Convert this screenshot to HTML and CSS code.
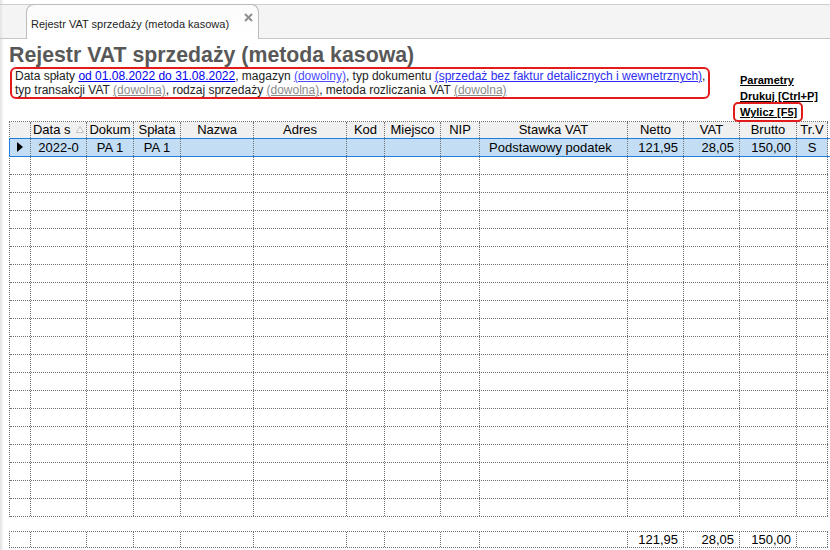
FILE: index.html
```html
<!DOCTYPE html>
<html lang="pl">
<head>
  <meta charset="UTF-8">
  <meta name="viewport" content="width=device-width, initial-scale=1.0">
  <title>Rejestr VAT sprzedaży (metoda kasowa)</title>
  <link rel="stylesheet" href="styles.css">
</head>
<body>
  <!-- Zakładki -->
  <div class="tabbar">
    <div class="tab">
      <span class="tab-title">Rejestr VAT sprzedaży (metoda kasowa)</span>
      <svg class="tab-close" width="9" height="9" viewBox="0 0 9 9"><path d="M1 1L8 8M8 1L1 8" stroke="#8e8e8e" stroke-width="2"/></svg>
    </div>
  </div>

  <div class="page">
    <div class="report-head">
      <div class="report-info">
        <h1>Rejestr VAT sprzedaży (metoda kasowa)</h1>
        <div class="filters">
          Data spłaty <a class="f-date">od 01.08.2022 do 31.08.2022</a>, magazyn <a class="f-link">(dowolny)</a>, typ dokumentu <a class="f-type">(sprzedaż bez faktur detalicznych i wewnetrznych)</a>,<br>
          typ transakcji VAT <a class="f-any">(dowolna)</a>, rodzaj sprzedaży <a class="f-any">(dowolna)</a>, metoda rozliczania VAT <a class="f-any">(dowolna)</a>
        </div>
      </div>
      <div class="actions">
        <a>Parametry</a>
        <a>Drukuj [Ctrl+P]</a>
        <a class="marked">Wylicz [F5]</a>
      </div>
    </div>

    <!-- Tabela rejestru -->
    <div class="grid" id="grid">
      <div class="row head">
        <div class="cell"></div>
        <div class="cell">Data s <svg class="sort" width="8" height="7" viewBox="0 0 8 7"><polygon points="0.5,6.5 4,0.5 7.5,6.5" fill="#f6f6f6" stroke="#c4c4c4"/></svg></div>
        <div class="cell">Dokum</div>
        <div class="cell">Spłata</div>
        <div class="cell">Nazwa</div>
        <div class="cell">Adres</div>
        <div class="cell">Kod</div>
        <div class="cell">Miejsco</div>
        <div class="cell">NIP</div>
        <div class="cell">Stawka VAT</div>
        <div class="cell">Netto</div>
        <div class="cell">VAT</div>
        <div class="cell">Brutto</div>
        <div class="cell">Tr.V</div>
      </div>
      <div class="row selected">
        <div class="cell"><span class="pointer"></span></div>
        <div class="cell">2022-0</div>
        <div class="cell">PA 1</div>
        <div class="cell">PA 1</div>
        <div class="cell"></div>
        <div class="cell"></div>
        <div class="cell"></div>
        <div class="cell"></div>
        <div class="cell"></div>
        <div class="cell left">Podstawowy podatek</div>
        <div class="cell num">121,95</div>
        <div class="cell num">28,05</div>
        <div class="cell num">150,00</div>
        <div class="cell">S</div>
      </div>
    </div>

    <div class="row total">
      <div class="cell"></div>
      <div class="cell"></div>
      <div class="cell"></div>
      <div class="cell"></div>
      <div class="cell"></div>
      <div class="cell"></div>
      <div class="cell"></div>
      <div class="cell"></div>
      <div class="cell"></div>
      <div class="cell"></div>
      <div class="cell num">121,95</div>
      <div class="cell num">28,05</div>
      <div class="cell num">150,00</div>
      <div class="cell"></div>
    </div>
  </div>

  <script>
  // puste wiersze siatki
  const grid = document.getElementById('grid');
  for (let i = 0; i < 20; i++) {
    const row = document.createElement('div');
    row.className = 'row';
    for (let j = 0; j < 14; j++) {
      const cell = document.createElement('div');
      cell.className = 'cell';
      row.appendChild(cell);
    }
    grid.appendChild(row);
  }
  </script>
</body>
</html>
```

FILE: styles.css
```css
* {
  box-sizing: border-box;
  margin: 0;
  padding: 0;
}

body {
  font-family: 'Liberation Sans', Arial, sans-serif;
  color: #000;
  width: 830px;
  height: 550px;
  overflow: hidden;
  background: linear-gradient(to right, #dedede 0, #f2f2f2 2px, #fff 4px);
}

/* Pasek zakładek */
.tabbar {
  display: flex;
  align-items: flex-start;
  margin-top: 4px;
  height: 35px;
  padding-left: 26px;
  background: linear-gradient(to right, #e2e2e2 0, #f4f4f4 3px);
  border-top: 1px solid #cdcdcd;
  border-bottom: 1px solid #c6c6c6;
}

.tab {
  display: flex;
  width: 233px;
  height: 35px;
  margin-top: -1px;
  padding: 13px 5px 0 4px;
  background: linear-gradient(#fbfbfb, #fff);
  border: 1px solid #bdbdbd;
  border-bottom: none;
  border-radius: 8px 8px 0 0;
}

.tab-title {
  font-size: 11px;
  line-height: 13px;
  color: #1e1e1e;
}

.tab-close {
  margin-left: auto;
  margin-top: -5px;
}

/* Nagłówek raportu */
.page {
  padding: 4px 0 0 9px;
}

.report-head {
  display: flex;
  height: 78px;
}

.report-info {
  width: 731px;
}

h1 {
  font-size: 21.3px;
  line-height: 24px;
  font-weight: bold;
  color: #585858;
  white-space: nowrap;
}

.filters {
  width: 700px;
  margin-left: 1px;
  padding: 0 3px;
  border: 2px solid #e41b1b;
  border-radius: 6px;
  font-size: 12px;
  line-height: 14px;
  color: #222;
  white-space: nowrap;
}

.filters a {
  text-decoration: underline;
}

.f-date {
  color: #0000ee;
}

.f-link {
  color: #4b4bff;
}

.f-type {
  color: #2d2df2;
}

.f-any {
  color: #8a8a8a;
}

.actions {
  display: flex;
  flex-direction: column;
  align-items: flex-start;
  padding-top: 29px;
  font-size: 11px;
  line-height: 16px;
  font-weight: bold;
  white-space: nowrap;
}

.actions a {
  color: #000;
  text-decoration: underline;
}

.actions .marked {
  margin: -2px 0 0 -7px;
  padding: 0 4px 0 5px;
  border: 2px solid #e41b1b;
  border-radius: 5px;
}

/* Siatka */
.grid {
  width: 819px;
  border-left: 1px dotted #707070;
  border-top: 1px dotted #707070;
}

.row {
  display: grid;
  grid-template-columns: 21px 56px 47px 47px 73px 93px 38px 56px 39px 148px 56px 56px 57px 31px;
  height: 18px;
  border-bottom: 1px dotted #707070;
  font-size: 13px;
  line-height: 17px;
}

.cell {
  border-right: 1px dotted #707070;
  overflow: hidden;
  white-space: nowrap;
  text-align: center;
}

.cell.num {
  text-align: right;
  padding-right: 5px;
}

.cell.left {
  text-align: left;
  padding-left: 9px;
}

.row.head {
  height: 16px;
  line-height: 16px;
  border-bottom: none;
  background: #f0f0f0;
}

.sort {
  margin-left: 2px;
  vertical-align: 1px;
}

.row.selected {
  position: relative;
  height: 19px;
  padding: 1px 0;
  border-bottom: none;
  background: #c3ddf5;
}

.row.selected::after {
  content: '';
  position: absolute;
  left: -1px;
  right: -3px;
  top: 0;
  bottom: 0;
  border: 1px solid #1f7ddb;
}

.pointer {
  display: inline-block;
  margin-top: 3px;
  vertical-align: top;
  border-left: 6px solid #000;
  border-top: 5px solid transparent;
  border-bottom: 5px solid transparent;
}

.row.total {
  width: 819px;
  height: 17px;
  margin-top: 14px;
  line-height: 15px;
  border-left: 1px dotted #707070;
  border-top: 1px dotted #707070;
}
```
